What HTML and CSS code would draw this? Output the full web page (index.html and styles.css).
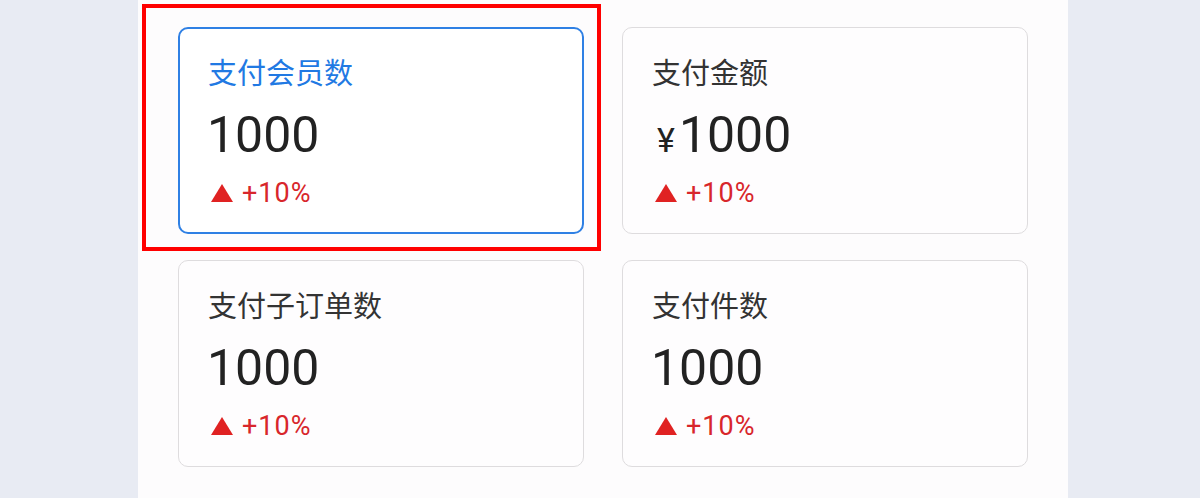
FILE: index.html
```html
<!DOCTYPE html>
<html lang="zh-CN">
<head>
<meta charset="utf-8">
<title>支付数据</title>
<link rel="stylesheet" href="styles.css">
</head>
<body>
<main class="panel">
  <div class="highlight"></div>
  <div class="grid">
    <section class="card active">
      <div class="title">支付会员数</div>
      <div class="value">1000</div>
      <div class="trend"><svg class="tri" width="22" height="18" viewBox="0 0 22 18"><path d="M11 0 L22 18 L0 18 Z" fill="#e02222"/></svg><span>+10%</span></div>
    </section>
    <section class="card">
      <div class="title">支付金额</div>
      <div class="value"><span class="yen">¥</span>1000</div>
      <div class="trend"><svg class="tri" width="22" height="18" viewBox="0 0 22 18"><path d="M11 0 L22 18 L0 18 Z" fill="#e02222"/></svg><span>+10%</span></div>
    </section>
    <section class="card">
      <div class="title">支付子订单数</div>
      <div class="value">1000</div>
      <div class="trend"><svg class="tri" width="22" height="18" viewBox="0 0 22 18"><path d="M11 0 L22 18 L0 18 Z" fill="#e02222"/></svg><span>+10%</span></div>
    </section>
    <section class="card">
      <div class="title">支付件数</div>
      <div class="value">1000</div>
      <div class="trend"><svg class="tri" width="22" height="18" viewBox="0 0 22 18"><path d="M11 0 L22 18 L0 18 Z" fill="#e02222"/></svg><span>+10%</span></div>
    </section>
  </div>
</main>
</body>
</html>
```

FILE: styles.css
```css
html, body {
  margin: 0;
  padding: 0;
  height: 100%;
  overflow: hidden;
}
body {
  background: #e8ebf3;
  padding-left: 138px;
  box-sizing: border-box;
  font-family: Roboto, "Noto Sans CJK SC", sans-serif;
}
.panel {
  position: relative;
  width: 930px;
  min-height: 100vh;
  background: #fdfcfd;
  padding: 27px 40px 0;
  box-sizing: border-box;
}
.highlight {
  position: absolute;
  left: 4px;
  top: 4px;
  width: 459px;
  height: 247px;
  border: 4px solid #ff0000;
  box-sizing: border-box;
  pointer-events: none;
}
.grid {
  display: grid;
  grid-template-columns: 406px 406px;
  column-gap: 38px;
  row-gap: 26px;
}
.card {
  height: 207px;
  box-sizing: border-box;
  border: 1px solid #dedcde;
  border-radius: 10px;
  background: #fefdfe;
  padding: 23px 30px 0 29px;
  display: flex;
  flex-direction: column;
}
.card.active {
  border: 2px solid #2f80e4;
  padding: 22px 29px 0 28px;
  background: #ffffff;
}
.title {
  font-family: "Noto Sans CJK SC", sans-serif;
  font-size: 29px;
  line-height: 40px;
  color: #333333;
}
.active .title {
  color: #2179e3;
}
.value {
  margin-top: 14px;
  font-size: 50px;
  line-height: 60px;
  height: 60px;
  color: #222222;
  margin-left: -1px;
}
.yen {
  font-size: 34px;
  line-height: 1;
  margin-left: 6px;
  margin-right: 4px;
}
.trend {
  margin-top: 13px;
  display: flex;
  align-items: center;
  gap: 9px;
  font-size: 27px;
  letter-spacing: 1px;
  line-height: 30px;
  color: #d8262b;
  padding-left: 3px;
}
.tri {
  display: block;
}
```
